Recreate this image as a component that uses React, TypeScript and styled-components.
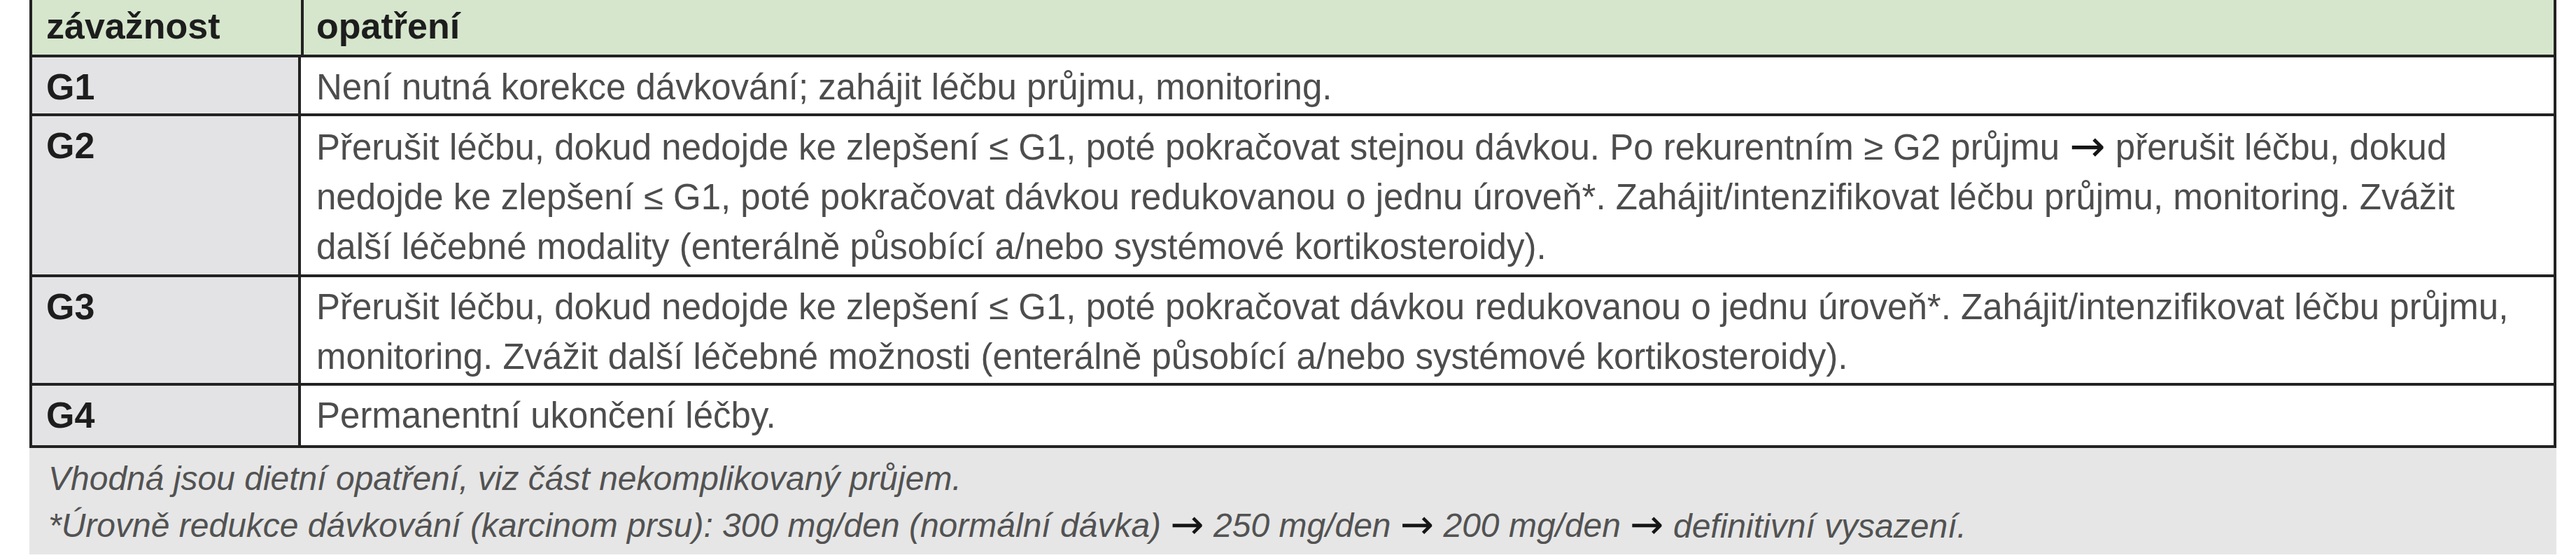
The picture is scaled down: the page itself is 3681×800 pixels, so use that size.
import styled, { createGlobalStyle } from "styled-components";

const GlobalStyle = createGlobalStyle`
    html, body {
        margin: 0;
        padding: 0;
        background: #ffffff;
    }
    body {
        font-family: "Liberation Sans", Arial, sans-serif;
    }
`;

type Row = {
    grade: string;
    lines: string[];
    tail?: number;
};

const rows: Row[] = [
    {
        grade: "G1",
        lines: ["Není nutná korekce dávkování; zahájit léčbu průjmu, monitoring."],
    },
    {
        grade: "G2",
        lines: [
            "Přerušit léčbu, dokud nedojde ke zlepšení ≤ G1, poté pokračovat stejnou dávkou. Po rekurentním ≥ G2 průjmu → přerušit léčbu, dokud",
            "nedojde ke zlepšení ≤ G1, poté pokračovat dávkou redukovanou o jednu úroveň*. Zahájit/intenzifikovat léčbu průjmu, monitoring. Zvážit",
            "další léčebné modality (enterálně působící a/nebo systémové kortikosteroidy).",
        ],
        tail: 4,
    },
    {
        grade: "G3",
        lines: [
            "Přerušit léčbu, dokud nedojde ke zlepšení ≤ G1, poté pokračovat dávkou redukovanou o jednu úroveň*. Zahájit/intenzifikovat léčbu průjmu,",
            "monitoring. Zvážit další léčebné možnosti (enterálně působící a/nebo systémové kortikosteroidy).",
        ],
    },
    {
        grade: "G4",
        lines: ["Permanentní ukončení léčby."],
        tail: 7,
    },
];

const notes = [
    "Vhodná jsou dietní opatření, viz část nekomplikovaný průjem.",
    "*Úrovně redukce dávkování (karcinom prsu): 300 mg/den (normální dávka) → 250 mg/den → 200 mg/den → definitivní vysazení.",
];

// arrows are printed darker and wider than the running text
function withArrows(text: string) {
    const parts = text.split("→");
    return parts.map((part, i) => (
        <span key={i}>
            {part}
            {i < parts.length - 1 && <Arrow>→</Arrow>}
        </span>
    ));
}

function App() {
    return (
        <>
            <GlobalStyle />
            <Page>
                <Frame>
                    <HeaderRow>
                        <HeadCell>závažnost</HeadCell>
                        <HeadCell $divider>opatření</HeadCell>
                    </HeaderRow>
                    {rows.map(row => (
                        <BodyRow key={row.grade}>
                            <GradeCell $tail={row.tail ?? 2}>{row.grade}</GradeCell>
                            <TextCell $tail={row.tail ?? 2}>
                                {row.lines.map((line, i) => (
                                    <Line key={i}>{withArrows(line)}</Line>
                                ))}
                            </TextCell>
                        </BodyRow>
                    ))}
                </Frame>
                <Notes>
                    {notes.map((note, i) => (
                        <Line key={i}>{withArrows(note)}</Line>
                    ))}
                </Notes>
            </Page>
        </>
    );
}

export default App;

const Page = styled.div`
    width: 3611px;
    margin-left: 42px;
    padding-bottom: 15px;
`;

const Frame = styled.div`
    box-sizing: border-box;
    width: 100%;
    border-left: 4px solid #222222;
    border-right: 4px solid #222222;
`;

const HeaderRow = styled.div`
    display: grid;
    grid-template-columns: 384px 1fr;
    background-color: #d5e6cc;
    border-bottom: 4px solid #222222;
`;

const BodyRow = styled.div`
    display: grid;
    grid-template-columns: 384px 1fr;
    border-bottom: 4px solid #222222;
`;

const HeadCell = styled.div<{ $divider?: boolean }>`
    box-sizing: border-box;
    padding: 2px 0 5px ${props => (props.$divider ? "18px" : "20px")};
    font-size: 52px;
    line-height: 71px;
    font-weight: 700;
    color: #1d1d1d;
    white-space: nowrap;
    border-left: ${props => (props.$divider ? "4px solid #222222" : "none")};
`;

const GradeCell = styled.div<{ $tail: number }>`
    box-sizing: border-box;
    padding: 7px 0 ${props => props.$tail}px 20px;
    background-color: #e3e3e5;
    border-right: 4px solid #222222;
    font-size: 52px;
    line-height: 71px;
    font-weight: 700;
    color: #1d1d1d;
`;

const TextCell = styled.div<{ $tail: number }>`
    box-sizing: border-box;
    padding: 7px 0 ${props => props.$tail}px 22px;
    background-color: #ffffff;
    font-size: 51px;
    line-height: 71px;
    color: #4d4d4d;
`;

const Line = styled.div`
    white-space: nowrap;
`;

const Arrow = styled.span`
    font-family: "DejaVu Sans", sans-serif;
    font-style: normal;
    font-size: 1.2em;
    vertical-align: -0.04em;
    color: #151515;
`;

const Notes = styled.div`
    box-sizing: border-box;
    padding: 10px 0 8px 27px;
    background-color: #e6e6e6;
    font-size: 48px;
    line-height: 67px;
    font-style: italic;
    color: #525252;
`;
